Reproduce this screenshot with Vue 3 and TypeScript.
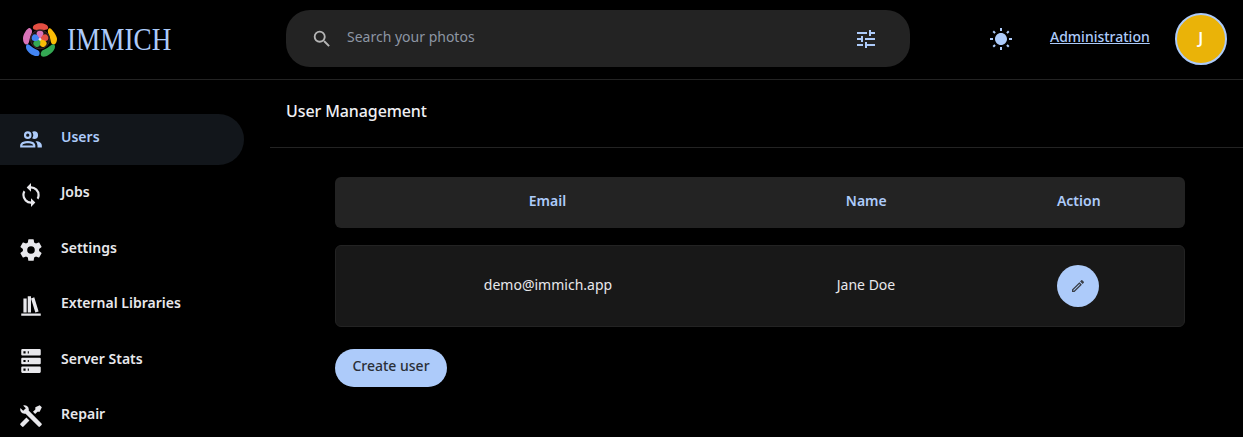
<script setup lang="ts">
interface NavItem {
  label: string
  icon: string
  active?: boolean
}

const nav: NavItem[] = [
  {
    label: 'Users',
    active: true,
    icon: 'M13.07 10.41A5 5 0 0 0 13.07 4.59A3.39 3.39 0 0 1 15 4A3.5 3.5 0 0 1 15 11A3.39 3.39 0 0 1 13.07 10.41M5.5 7.5A3.5 3.5 0 1 1 9 11A3.5 3.5 0 0 1 5.5 7.5M7.5 7.5A1.5 1.5 0 1 0 9 6A1.5 1.5 0 0 0 7.5 7.5M16 17V19H2V17S2 13 9 13 16 17 16 17M14 17C13.86 16.22 12.67 15 9 15S4.07 16.22 4 17M15.95 13A5.32 5.32 0 0 1 18 17V19H22V17S22 13.37 15.94 13Z',
  },
  {
    label: 'Jobs',
    icon: 'M12,18A6,6 0 0,1 6,12C6,11 6.25,10.03 6.7,9.2L5.24,7.74C4.46,8.97 4,10.43 4,12A8,8 0 0,0 12,20V23L16,19L12,15M12,6A6,6 0 0,1 18,12C18,13 17.75,13.97 17.3,14.8L18.76,16.26C19.54,15.03 20,13.57 20,12A8,8 0 0,0 12,4V1L8,5L12,9V6Z',
  },
  {
    label: 'Settings',
    icon: 'M12,15.5A3.5,3.5 0 0,1 8.5,12A3.5,3.5 0 0,1 12,8.5A3.5,3.5 0 0,1 15.5,12A3.5,3.5 0 0,1 12,15.5M19.43,12.97C19.47,12.65 19.5,12.33 19.5,12C19.5,11.67 19.47,11.34 19.43,11L21.54,9.37C21.73,9.22 21.78,8.95 21.66,8.73L19.66,5.27C19.54,5.05 19.27,4.96 19.05,5.05L16.56,6.05C16.04,5.66 15.5,5.32 14.87,5.07L14.5,2.42C14.46,2.18 14.25,2 14,2H10C9.75,2 9.54,2.18 9.5,2.42L9.13,5.07C8.5,5.32 7.96,5.66 7.44,6.05L4.95,5.05C4.73,4.96 4.46,5.05 4.34,5.27L2.34,8.73C2.21,8.95 2.27,9.22 2.46,9.37L4.57,11C4.53,11.34 4.5,11.67 4.5,12C4.5,12.33 4.53,12.65 4.57,12.97L2.46,14.63C2.27,14.78 2.21,15.05 2.34,15.27L4.34,18.73C4.46,18.95 4.73,19.03 4.95,18.95L7.44,17.94C7.96,18.34 8.5,18.68 9.13,18.93L9.5,21.58C9.54,21.82 9.75,22 10,22H14C14.25,22 14.46,21.82 14.5,21.58L14.87,18.93C15.5,18.67 16.04,18.34 16.56,17.94L19.05,18.95C19.27,19.03 19.54,18.95 19.66,18.73L21.66,15.27C21.78,15.05 21.73,14.78 21.54,14.63L19.43,12.97Z',
  },
  {
    label: 'External Libraries',
    icon: 'M9 3V18H12V3H9M12 5L16 18L19 17L15 4L12 5M5 5V18H8V5H5M3 19V21H21V19H3Z',
  },
  {
    label: 'Server Stats',
    icon: 'M4,1H20A1,1 0 0,1 21,2V6A1,1 0 0,1 20,7H4A1,1 0 0,1 3,6V2A1,1 0 0,1 4,1M4,9H20A1,1 0 0,1 21,10V14A1,1 0 0,1 20,15H4A1,1 0 0,1 3,14V10A1,1 0 0,1 4,9M4,17H20A1,1 0 0,1 21,18V22A1,1 0 0,1 20,23H4A1,1 0 0,1 3,22V18A1,1 0 0,1 4,17M9,5H10V3H9V5M9,13H10V11H9V13M9,21H10V19H9V21M5,3V5H7V3H5M5,11V13H7V11H5M5,19V21H7V19H5Z',
  },
  {
    label: 'Repair',
    icon: 'M21.71 20.29L20.29 21.71A1 1 0 0 1 18.88 21.71L7 9.85A3.81 3.81 0 0 1 6 10A4 4 0 0 1 2.22 4.7L4.76 7.24L5.29 6.71L6.71 5.29L7.24 4.76L4.7 2.22A4 4 0 0 1 10 6A3.81 3.81 0 0 1 9.85 7L21.71 18.88A1 1 0 0 1 21.71 20.29M2.29 18.88A1 1 0 0 0 2.29 20.29L3.71 21.71A1 1 0 0 0 5.12 21.71L10.59 16.25L7.76 13.42M20 2L16 4V6L13.83 8.17L15.83 10.17L18 8H20L22 4Z',
  },
]

const magnify =
  'M9.5,3A6.5,6.5 0 0,1 16,9.5C16,11.11 15.41,12.59 14.44,13.73L14.71,14H15.5L20.5,19L19,20.5L14,15.5V14.71L13.73,14.44C12.59,15.41 11.11,16 9.5,16A6.5,6.5 0 0,1 3,9.5A6.5,6.5 0 0,1 9.5,3M9.5,5C7,5 5,7 5,9.5C5,12 7,14 9.5,14C12,14 14,12 14,9.5C14,7 12,5 9.5,5Z'
const tune =
  'M3,17V19H9V17H3M3,5V7H13V5H3M13,21V19H21V17H13V15H11V21H13M7,9V11H3V13H7V15H9V9H7M21,13V11H11V13H21M15,9H17V7H21V5H17V3H15V9Z'
const sun =
  'M3.55 19.09L4.96 20.5L6.76 18.71L5.34 17.29M12 6C8.69 6 6 8.69 6 12S8.69 18 12 18 18 15.31 18 12C18 8.68 15.31 6 12 6M20 13H23V11H20M17.24 18.71L19.04 20.5L20.45 19.09L18.66 17.29M20.45 5L19.04 3.6L17.24 5.39L18.66 6.81M13 1H11V4H13M6.76 5.39L4.96 3.6L3.55 5L5.34 6.81L6.76 5.39M1 13H4V11H1M13 23H11V20H13'
const pencil =
  'M14.06,9L15,9.94L5.92,19H5V18.08L14.06,9M17.66,3C17.41,3 17.15,3.1 16.96,3.29L15.13,5.12L18.88,8.87L20.71,7.04C21.1,6.65 21.1,6 20.71,5.63L18.37,3.29C18.17,3.09 17.92,3 17.66,3M14.06,6.19L3,17.25V21H6.75L17.81,9.94L14.06,6.19Z'

// inner flower of the logo, clockwise from the top
const innerPetals = ['#d973b8', '#e44f42', '#fabc05', '#34a853', '#4285f4']
</script>

<template>
  <div class="page">
    <header class="topbar">
      <div class="brand">
        <svg class="logo" viewBox="0 0 100 100">
          <path d="M29 14C29 -4 74 -4 74 14C74 22 62 20 51 20C40 20 29 22 29 14Z" fill="#e44f42" />
          <path d="M76 16C82 10 100 38 100 46C100 60 92 66 86 62C80 58 82 46 76 34C72 26 72 20 76 16Z" fill="#fabc05" />
          <path d="M94 68C96 84 66 104 55 98C50 94 52 84 58 80C70 76 76 70 84 64C88 61 93 62 94 68Z" fill="#34a853" />
          <path d="M9 68C6 84 34 102 46 96C50 92 50 84 44 80C32 76 26 70 18 64C14 61 10 62 9 68Z" fill="#4285f4" />
          <path d="M22 16C14 10 0 34 0 46C0 60 8 66 14 62C20 58 18 46 24 34C28 26 28 20 22 16Z" fill="#d973b8" />
          <circle cx="50" cy="48" r="28" fill="#1a1414" stroke="#5a3a3a" stroke-width="2" />
          <path
            v-for="(color, i) in innerPetals"
            :key="color"
            d="M50 47C37 38 36 23 50 23C64 23 63 38 50 47Z"
            :fill="color"
            :transform="`rotate(${i * 72} 50 48)`"
          />
          <circle cx="50" cy="48" r="4" fill="#e8e8e8" />
        </svg>
        <span class="wordmark">IMMICH</span>
      </div>
      <div class="search">
        <svg class="search-icon" viewBox="0 0 24 24"><path :d="magnify" /></svg>
        <span class="placeholder">Search your photos</span>
        <svg class="tune-icon" viewBox="0 0 24 24"><path :d="tune" /></svg>
      </div>
      <div class="top-actions">
        <svg class="sun-icon" viewBox="0 0 24 24"><path :d="sun" /></svg>
        <a class="admin-link">Administration</a>
        <div class="avatar">J</div>
      </div>
    </header>

    <div class="body">
      <aside class="sidebar">
        <div v-for="item in nav" :key="item.label" class="nav-row" :class="{ active: item.active }">
          <svg class="nav-icon" viewBox="0 0 24 24"><path :d="item.icon" /></svg>
          <span>{{ item.label }}</span>
        </div>
      </aside>

      <main class="main">
        <div class="title-bar">User Management</div>
        <section class="content">
          <div class="table-head">
            <div class="col-email"><span>Email</span></div>
            <div class="col-name"><span>Name</span></div>
            <div class="col-action"><span>Action</span></div>
          </div>
          <div class="table-row">
            <div class="col-email"><span>demo@immich.app</span></div>
            <div class="col-name"><span>Jane Doe</span></div>
            <div class="col-action">
              <button class="edit-btn">
                <svg viewBox="0 0 24 24"><path :d="pencil" /></svg>
              </button>
            </div>
          </div>
          <button class="create-btn">Create user</button>
        </section>
      </main>
    </div>
  </div>
</template>

<style>
html,
body {
  margin: 0;
  background: #000;
}
</style>

<style scoped>
.page {
  height: 437px;
  overflow: hidden;
  background: #000;
  color: #e8e8ec;
  font-family: 'Noto Sans', 'Open Sans', sans-serif;
  font-size: 14px;
  font-weight: 500;
}
svg {
  display: block;
  fill: currentColor;
}
.topbar {
  display: flex;
  align-items: center;
  height: 79px;
  border-bottom: 1px solid #232323;
  box-sizing: content-box;
}
.brand {
  display: flex;
  align-items: center;
  width: 286px;
  padding-left: 23px;
  box-sizing: border-box;
}
.logo {
  width: 34px;
  height: 34px;
}
.wordmark {
  display: inline-block;
  margin-left: 10px;
  font-family: 'Liberation Serif', serif;
  font-size: 32px;
  font-weight: 400;
  color: #adcbfa;
  transform: scaleX(0.85);
  transform-origin: left center;
}
.search {
  display: flex;
  align-items: center;
  width: 624px;
  height: 57px;
  margin-top: -2px;
  border-radius: 24px;
  background: #232323;
  box-sizing: border-box;
  padding: 0 32px 0 25px;
}
.search-icon {
  width: 22px;
  height: 22px;
  color: #b5b5b5;
}
.placeholder {
  margin-left: 14px;
  margin-top: -5px;
  flex: 1;
  color: #8d96a3;
  font-size: 14px;
  font-weight: 400;
}
.tune-icon {
  width: 24px;
  height: 24px;
  color: #adcbfa;
}
.top-actions {
  flex: 1;
  display: flex;
  align-items: center;
  padding-left: 79px;
}
.sun-icon {
  width: 24px;
  height: 24px;
  color: #adcbfa;
  margin-top: -2px;
}
.admin-link {
  margin-left: 37px;
  color: #adcbfa;
  text-decoration: underline;
  margin-top: -7px;
  white-space: nowrap;
}
.avatar {
  display: flex;
  align-items: center;
  justify-content: center;
  width: 52px;
  height: 52px;
  margin-left: 25px;
  margin-top: -1px;
  padding-bottom: 2px;
  box-sizing: border-box;
  border: 2px solid #adcbfa;
  border-radius: 50%;
  background: #eab308;
  color: #fff;
  font-size: 16px;
  font-weight: 600;
}
.body {
  display: flex;
}
.sidebar {
  width: 270px;
  flex: none;
  padding-top: 34px;
  box-sizing: border-box;
}
.nav-row {
  display: flex;
  align-items: center;
  width: 244px;
  height: 51px;
  margin-bottom: 4.4px;
  padding-left: 18px;
  box-sizing: border-box;
  border-radius: 0 26px 26px 0;
  gap: 17px;
  color: #e8e8ec;
  font-weight: 600;
}
.nav-row span {
  margin-top: -6px;
}
.nav-row.active {
  background: #12161b;
  color: #adcbfa;
}
.nav-icon {
  width: 26px;
  height: 26px;
  flex: none;
}
.main {
  flex: 1;
  min-width: 0;
}
.title-bar {
  height: 68px;
  padding: 19px 0 0 16px;
  box-sizing: border-box;
  border-bottom: 1px solid #232323;
  font-size: 16px;
  letter-spacing: -0.1px;
  color: #f0f0f4;
  line-height: 24px;
}
.content {
  width: 850px;
  margin: 29px 0 0 65px;
}
.table-head {
  display: flex;
  align-items: center;
  height: 51px;
  border-radius: 6px;
  background: #232323;
  color: #adcbfa;
  text-align: center;
  font-weight: 600;
}
.table-head span,
.table-row span {
  position: relative;
  top: -2px;
}
.table-row {
  display: flex;
  align-items: center;
  height: 82px;
  margin-top: 17px;
  box-sizing: border-box;
  border: 1px solid #232323;
  border-radius: 6px;
  background: #181818;
  text-align: center;
  font-weight: 400;
}
.col-email {
  width: 50%;
}
.col-name,
.col-action {
  width: 25%;
}
.col-action {
  display: flex;
  justify-content: center;
}
.edit-btn {
  display: flex;
  align-items: center;
  justify-content: center;
  width: 42px;
  height: 42px;
  padding: 0;
  border: none;
  border-radius: 50%;
  background: #adcbfa;
  color: #3a3f47;
}
.edit-btn svg {
  width: 16px;
  height: 16px;
}
.create-btn {
  display: block;
  width: 112px;
  height: 38px;
  margin-top: 22px;
  padding: 0 0 5px;
  border: none;
  border-radius: 19px;
  background: #adcbfa;
  color: #2a2f37;
  font: inherit;
}
</style>
